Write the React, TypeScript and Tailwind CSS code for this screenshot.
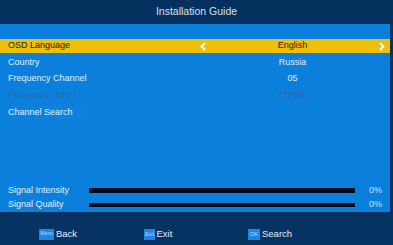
import React from "react";

const Chev = ({ dir }: { dir: "l" | "r" }) => (
  <svg width="6" height="9" viewBox="0 0 6 9">
    <polyline
      points={dir === "l" ? "5,1 1.5,4.5 5,8" : "1,1 4.5,4.5 1,8"}
      fill="none"
      stroke="#ffffff"
      strokeWidth="1.8"
    />
  </svg>
);

const rows = [
  { label: "OSD Language", value: "English", sel: true },
  { label: "Country", value: "Russia" },
  { label: "Frequency Channel", value: "05" },
  { label: "Frequency (KHz)", value: "177500", dim: true },
  { label: "Channel Search", value: "", cs: true },
];

export default function App() {
  return (
    <div
      className="w-[393px] h-[245px] flex flex-col bg-[#063362] overflow-hidden"
      style={{ fontFamily: '"Liberation Sans", Arial, sans-serif' }}
    >
      <div className="h-[24px] flex items-center justify-center text-[10.5px] text-[#d5e2ef] bg-[#04305e]">
        Installation Guide
      </div>
      <div className="flex-1 flex">
        <div className="w-[390px] bg-[#0a80dc] flex flex-col justify-between pt-[15px]">
          <div className="flex flex-col gap-[2.6px]">
            {rows.map((r) => (
              <div
                key={r.label}
                className={
                  "h-[14px] flex items-center text-[9px] " +
                  (r.sel ? "bg-[#f0bf0a] text-[#1d1a10]" : r.dim ? "text-[#3467a4]" : "text-[#e2eefa]")
                }
              >
                <div className="w-[196px] h-full flex items-center pl-[8px]">
                  <span className={r.cs ? "bg-[#0c82de] pr-[14px]" : ""}>{r.label}</span>
                </div>
                <div className="flex-1 h-full flex items-center justify-between pl-[4px] pr-[5px]">
                  <span className="w-[6px]">{r.sel && <Chev dir="l" />}</span>
                  <span>{r.value}</span>
                  <span className="w-[6px]">{r.sel && <Chev dir="r" />}</span>
                </div>
              </div>
            ))}
          </div>
          <div className="flex flex-col">
            {["Signal Intensity", "Signal Quality"].map((s) => (
              <div key={s} className="h-[14.5px] flex items-center text-[9px] text-[#e2eefa]">
                <div className="w-[89px] pl-[8px]">{s}</div>
                <div className="w-[266px] h-[4.5px] bg-[#020b1c]" />
                <div className="flex-1 text-right pr-[8px] text-[#cfe2f5]">0%</div>
              </div>
            ))}
          </div>
        </div>
        <div className="w-[3px] bg-[#063362]" />
      </div>
      <div className="h-[33px] flex items-start pt-[15px] text-[9.5px] text-[#e2eefa]">
        <div className="flex items-center pl-[39px] w-[144px]">
          <span className="h-[11px] w-[15px] bg-[#1c86e2] text-[5px] text-[#bcdcf8] flex items-center justify-center mr-[2px]">Menu</span>
          Back
        </div>
        <div className="flex items-center w-[104px]">
          <span className="h-[11px] w-[11px] bg-[#1c86e2] text-[5.5px] text-[#bcdcf8] flex items-center justify-center mr-[1.5px]">Exit</span>
          Exit
        </div>
        <div className="flex items-center">
          <span className="h-[11px] w-[12px] bg-[#1c86e2] text-[6px] text-[#bcdcf8] flex items-center justify-center mr-[2px]">OK</span>
          Search
        </div>
      </div>
    </div>
  );
}
